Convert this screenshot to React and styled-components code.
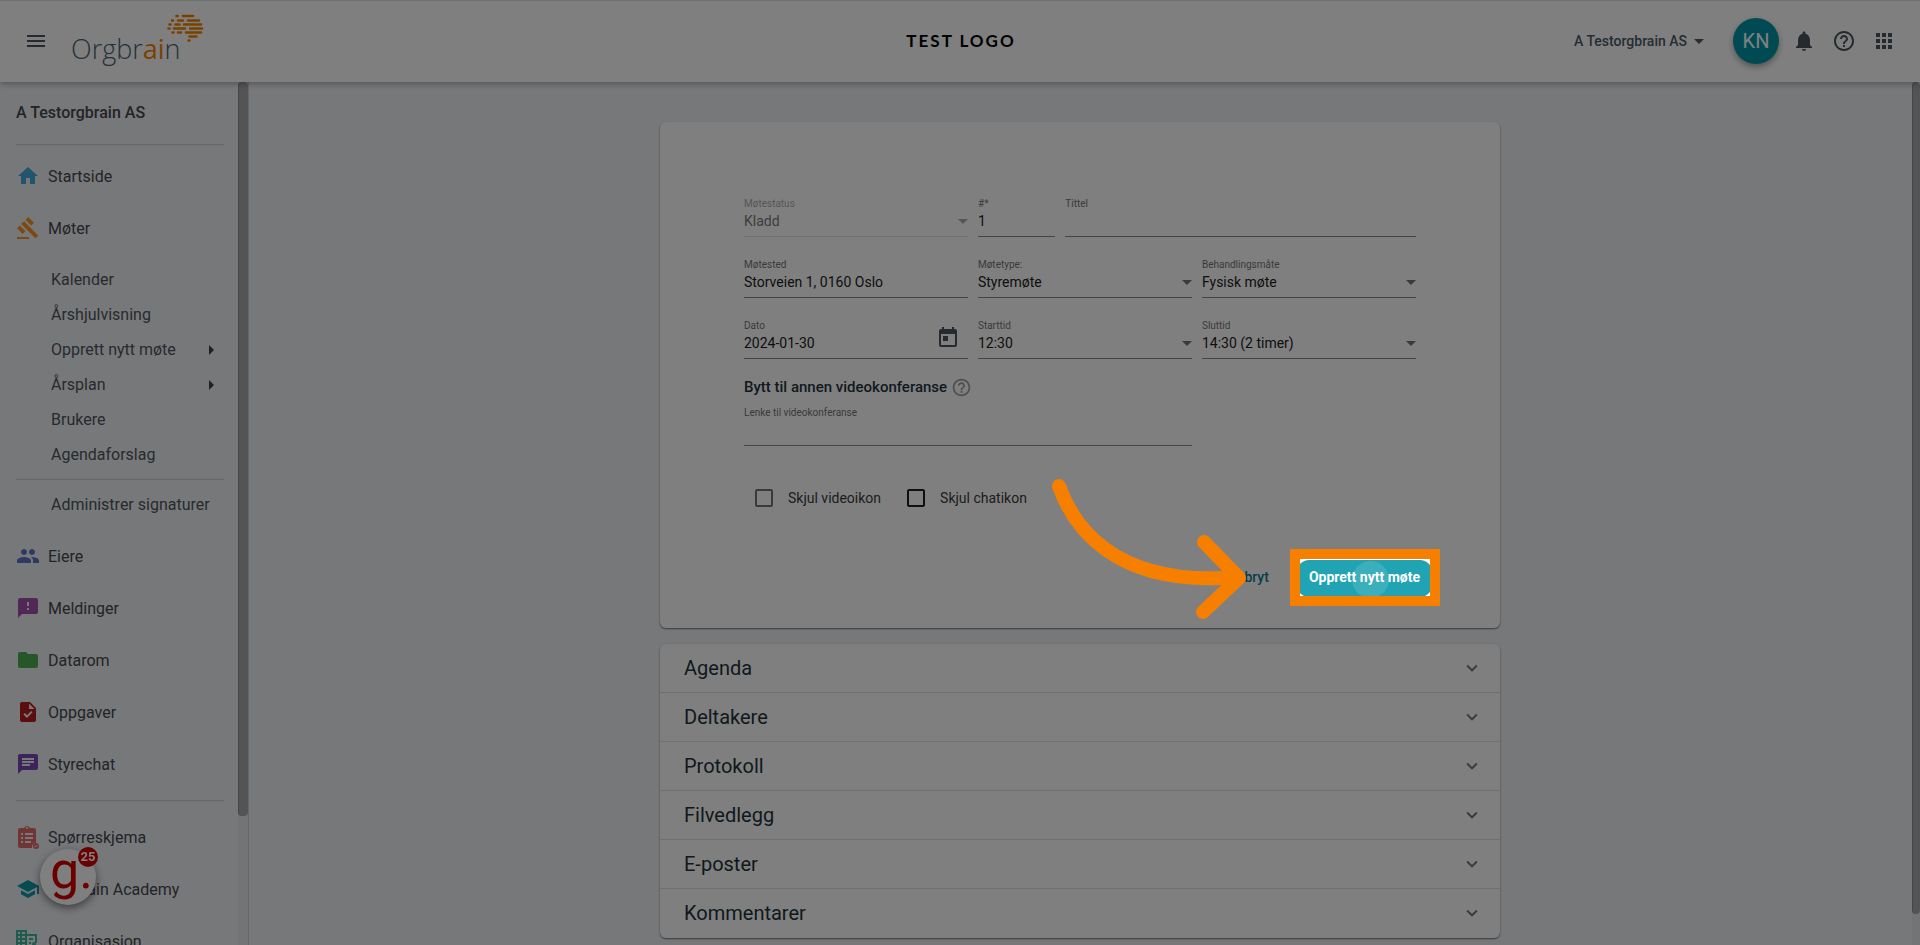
import React from 'react';

import styled, { createGlobalStyle } from 'styled-components';
import {
	MdApps,
	MdArrowDropDown,
	MdArrowRight,
	MdChat,
	MdExpandMore,
	MdFeedback,
	MdFolder,
	MdGavel,
	MdHelpOutline,
	MdHome,
	MdMenu,
	MdNotifications,
	MdPeople,
	MdSchool,
	MdTask,
	MdToday,
} from 'react-icons/md';

const GlobalStyle = createGlobalStyle`
	* {
		box-sizing: border-box;
	}

	body {
		margin: 0;
		font-family: Roboto, 'Liberation Sans', sans-serif;
		font-size: 14px;
		color: #212121;
	}

	button, input, select {
		margin: 0;
		font: inherit;
		color: inherit;
	}

	a {
		color: inherit;
		text-decoration: none;
	}
`;

const Shell = styled.div`
	display: flex;
	flex-direction: column;
	height: 100vh;
	overflow: hidden;
	background: #eff1f4;
`;

/* ---------- header ---------- */

const Header = styled.header`
	position: relative;
	z-index: 2;
	flex: none;
	display: grid;
	grid-template-columns: 1fr auto 1fr;
	align-items: center;
	height: 82px;
	padding: 0 24px;
	background: white;
	box-shadow: inset 0 1px #e4e4e4, 0 2px 6px rgba(0, 0, 0, 0.3);
`;

const HeaderSide = styled.div`
	display: flex;
	align-items: center;
	justify-content: ${(props) => (props.$end ? 'flex-end' : 'flex-start')};
	gap: ${(props) => (props.$end ? '16px' : '23px')};
`;

const IconButton = styled.button`
	display: flex;
	padding: 0;
	border: none;
	background: none;
	color: ${(props) => props.$color || '#4a545c'};
	font-size: ${(props) => props.$size || 24}px;
	cursor: pointer;
`;

const BrandLink = styled.a`
	position: relative;
	display: block;
	padding-top: 16px;
	color: #4a6572;
	font-family: 'Open Sans', sans-serif;
	font-size: 27px;
	font-weight: 300;
	line-height: 36px;

	em {
		font-style: normal;
		font-weight: 400;
		color: #f08200;
	}

	svg {
		position: absolute;
		left: 95px;
		top: -2px;
	}
`;

const CompanyLogo = styled.div`
	padding: 0 0 2px 2px;
	font-family: Lato, sans-serif;
	font-size: 17px;
	font-weight: 700;
	letter-spacing: 2px;
	color: black;
`;

const OrgSwitch = styled.button`
	display: flex;
	align-items: center;
	margin-right: 6px;
	padding: 0;
	border: none;
	background: none;
	color: #4a5a66;
	font-weight: 500;
	cursor: pointer;

	svg {
		font-size: 24px;
	}
`;

const Avatar = styled.button`
	width: 46px;
	height: 46px;
	margin-right: -3px;
	padding: 0;
	border: none;
	border-radius: 50%;
	background: #0097a7;
	color: white;
	font-size: 20px;
	box-shadow: 0 3px 6px rgba(0, 0, 0, 0.35);
	cursor: pointer;
`;

/* ---------- sidebar ---------- */

const Body = styled.div`
	flex: 1;
	display: flex;
	min-height: 0;
`;

const Sidebar = styled.aside`
	flex: none;
	display: flex;
	width: 248px;
	box-shadow: 1px 0 #cdd0d3;
`;

const Nav = styled.nav`
	flex: 1;
	overflow: hidden;
	padding: 19px 14px 0 16px;
	color: #46484c;
	font-size: 16px;
`;

const NavTitle = styled.h2`
	margin: 0;
	padding-bottom: 19px;
	font-size: 16px;
	font-weight: 500;
	line-height: 24px;
`;

const NavRule = styled.hr`
	height: 1px;
	margin: ${(props) => props.$margin};
	border: none;
	background: #ccced1;
`;

const NavItem = styled.a`
	display: flex;
	align-items: center;
	gap: 8px;
	height: 52px;

	svg {
		flex: none;
		width: 24px;
		height: 24px;
		color: ${(props) => props.$color};
	}
`;

const SubNav = styled.div`
	padding: 8px 0;
`;

const SubItem = styled.a`
	display: flex;
	align-items: center;
	justify-content: space-between;
	height: 35px;
	padding: 0 1px 0 35px;
	color: #50555b;

	svg {
		font-size: 24px;
		color: #3c444c;
	}
`;

const Scrollbar = styled.div`
	flex: none;
	width: ${(props) => props.$width}px;
	background: #e6e8ea;
`;

const Thumb = styled.div`
	height: ${(props) => props.$share}%;
	border-left: 1px solid #7f919c;
	border-radius: 4px;
	background: #a8a8a8;
`;

/* ---------- meeting form ---------- */

const Main = styled.main`
	flex: 1;
	display: flex;
	flex-direction: column;
	align-items: center;
	gap: 16px;
	padding: 40px 24px 8px;
`;

const Card = styled.section`
	width: 100%;
	max-width: 840px;
	border-radius: 6px;
	background: white;
	box-shadow: 0 1px 2px rgba(0, 0, 0, 0.55);
`;

const Form = styled.form`
	padding: 74px 68px 31px;
`;

const Fields = styled.div`
	padding: 0 16px;
`;

const Row = styled.div`
	display: flex;
	margin-bottom: 20px;
`;

const FieldBox = styled.div`
	flex: 0 0 ${(props) => props.$basis};
	min-width: 0;
	padding-left: ${(props) => (props.$first ? 0 : 10)}px;
	opacity: ${(props) => (props.$disabled ? 0.6 : 1)};
`;

const Label = styled.label`
	display: block;
	font-size: 10px;
	line-height: 16px;
	color: #757575;
`;

const ControlArea = styled.div`
	display: grid;
	align-items: center;
	border-bottom: 1px solid ${(props) => (props.$disabled ? '#d0d0d0' : '#8a8a8a')};

	> * {
		grid-area: 1 / 1;
	}

	> button {
		align-self: start;
		align-items: center;
		justify-self: end;
		height: 8px;
		margin-right: 8px;
	}
`;

const Control = styled.input`
	width: 100%;
	height: 24px;
	padding: 0 0 6px;
	border: none;
	outline: none;
	background: none;
	appearance: none;
	line-height: 18px;
	opacity: 1;
`;

const Triangle = styled.span`
	justify-self: end;
	margin-bottom: 5px;
	border: 5px solid transparent;
	border-top-color: #757575;
	border-bottom: none;
	pointer-events: none;
`;

const VideoHeading = styled.h3`
	display: flex;
	align-items: center;
	gap: 4px;
	margin: -4px 0 6px;
	font-size: 15px;
	font-weight: 500;
	line-height: 24px;
	color: #1f3540;
`;

const CheckRow = styled.div`
	display: flex;
	gap: 26px;
	margin-top: 40px;
	padding-left: 11px;
`;

const CheckLabel = styled.label`
	display: flex;
	align-items: center;
	gap: 15px;
	height: 24px;
	color: #3a3a3a;
`;

const CheckBox = styled.input`
	appearance: none;
	width: 18px;
	height: 18px;
	border: 2px solid ${(props) => props.$color};
	border-radius: 2px;
`;

const Actions = styled.div`
	display: flex;
	justify-content: flex-end;
	gap: 16px;
	margin-top: 50px;
`;

const ActionButton = styled.button`
	position: relative;
	overflow: hidden;
	height: 37px;
	padding: 0 12px 4px;
	border: none;
	border-radius: 12px;
	background: ${(props) => (props.$primary ? '#20a4b3' : 'transparent')};
	color: ${(props) => (props.$primary ? 'white' : '#0f7f8c')};
	font-weight: ${(props) => (props.$primary ? 700 : 500)};
	cursor: pointer;
`;

const Ripple = styled.span`
	position: absolute;
	left: 55px;
	top: 1px;
	width: 37px;
	height: 37px;
	border-radius: 50%;
	background: rgba(255, 255, 255, 0.12);
`;

/* ---------- guide overlay ---------- */

const GuideAnchor = styled.div`
	position: relative;
`;

// The shadow spread darkens everything outside the frame
const Spotlight = styled.div`
	position: absolute;
	z-index: 10;
	inset: -11px -8px -9px -7px;
	border: 10px solid #f77f00;
	box-shadow: 0 0 0 9999px rgba(0, 0, 0, 0.5);
	pointer-events: none;
`;

const GuideArrow = styled.svg`
	position: absolute;
	z-index: 11;
	right: calc(100% + 40px);
	top: -86px;
	fill: none;
	stroke: #f77f00;
	stroke-width: 14;
	stroke-linecap: round;
	stroke-linejoin: round;
	pointer-events: none;
`;

/* ---------- sections ---------- */

const SectionButton = styled.button`
	display: flex;
	align-items: center;
	justify-content: space-between;
	width: 100%;
	height: 49px;
	padding: 0 17px 0 24px;
	border: none;
	border-bottom: 1px solid #e0e0e0;
	background: none;
	color: #22333b;
	font-size: 20px;
	text-align: left;
	cursor: pointer;

	&:last-child {
		border-bottom-color: transparent;
	}

	svg {
		font-size: 22px;
		color: #757575;
	}
`;

/* ---------- help widget ---------- */

const Widget = styled.button`
	position: fixed;
	z-index: 3;
	left: 40px;
	bottom: 40px;
	width: 56px;
	height: 56px;
	padding: 0 0 12px 7px;
	border: none;
	border-radius: 50%;
	background: white;
	color: #d40000;
	font-size: 52px;
	font-weight: 400;
	line-height: 40px;
	box-shadow: 0 3px 8px rgba(0, 0, 0, 0.5);
`;

const WidgetBadge = styled.span`
	position: absolute;
	right: -2px;
	top: -2px;
	width: 20px;
	height: 20px;
	border-radius: 50%;
	background: #d40000;
	color: white;
	font-size: 13px;
	font-weight: 700;
	line-height: 20px;
	text-align: center;
`;

/* ---------- drawings ---------- */

const BrainMark = () => (
	<svg width='40' height='30' viewBox='166 13 40 30' fill='none' stroke='#f08200' strokeWidth='2.6' strokeLinecap='round'>
		<path d='M176.5 16h1.2M183 16h10M172 20.5h1M178 20.5h5M188 20.5h11M169.500 24.500h1M175.500 24.500h4M184 24.500h17M168.500 28.500h1M174 28.500h11M190 28.500h12M172.500 32.500h1M178 32.500h3M186 32.500h15M189.500 36.500h7M188.500 40.500h1' />
	</svg>
);

const SurveyIcon = () => (
	<svg viewBox='0 0 24 24' fill='currentColor'>
		<path
			fillRule='evenodd'
			d='M4 3h4.200a3 3 0 0 1 5.600 0H18a2 2 0 0 1 2 2v13a4 4 0 0 0-4 5H4a2 2 0 0 1-2-2V5a2 2 0 0 1 2-2zm7-1a1 1 0 1 0 0 2 1 1 0 0 0 0-2zM5 8h2v2H5zm4 0h8v2H9zm-4 4h2v2H5zm4 0h8v2H9zm-4 4h2v2H5zm4 0h6v2H9z'
		/>
		<circle cx='20' cy='21' r='3' />
		<path d='M18.500 21l1 1 2-2' fill='none' stroke='#eff1f4' />
	</svg>
);

const BuildingIcon = () => (
	<svg viewBox='0 0 24 24' fill='currentColor'>
		<path
			fillRule='evenodd'
			d='M0 1h11v4h10v9h-2V7h-8v14H0zm2 2v2h2V3zm4 0v2h3V3zM2 7v2h2V7zm4 0v2h3V7zm-4 4v2h2v-2zm4 0v2h3v-2zm-4 4v2h2v-2zm4 0v2h3v-2z'
		/>
		<path d='M13 9h4v2h-4zM13 13h2v2h-2z' />
		<circle cx='18' cy='15' r='2' />
		<path d='M13 21c0-5 10-5 10 0z' />
	</svg>
);

/* ---------- parts ---------- */

const Field = ({ id, label, value = '', basis, first, disabled, options, icon }) => (
	<FieldBox $basis={basis} $first={first} $disabled={disabled}>
		<Label htmlFor={id}>{label}</Label>
		<ControlArea $disabled={disabled}>
			{options ? (
				<>
					<Control as='select' id={id} disabled={disabled}>
						{options.map((option) => (
							<option key={option}>{option}</option>
						))}
					</Control>
					<Triangle />
				</>
			) : (
				<Control id={id} type='text' defaultValue={value} />
			)}
			{icon}
		</ControlArea>
	</FieldBox>
);

const SECTIONS = ['Agenda', 'Deltakere', 'Protokoll', 'Filvedlegg', 'E-poster', 'Kommentarer'];

const SUB_ITEMS = [
	{ name: 'Kalender' },
	{ name: 'Årshjulvisning' },
	{ name: 'Opprett nytt møte', more: true },
	{ name: 'Årsplan', more: true },
	{ name: 'Brukere' },
	{ name: 'Agendaforslag' },
];

const MIDDLE_ITEMS = [
	{ name: 'Eiere', Icon: MdPeople, color: '#5c75c4' },
	{ name: 'Meldinger', Icon: MdFeedback, color: '#a34fad' },
	{ name: 'Datarom', Icon: MdFolder, color: '#4caf50' },
	{ name: 'Oppgaver', Icon: MdTask, color: '#b71c1c' },
	{ name: 'Styrechat', Icon: MdChat, color: '#7647b8' },
];

const LAST_ITEMS = [
	{ name: 'Spørreskjema', Icon: SurveyIcon, color: '#e56b6b' },
	{ name: 'Orgbrain Academy', Icon: MdSchool, color: '#0f97a7' },
	{ name: 'Organisasjon', Icon: BuildingIcon, color: '#3fb8a0' },
];

const NavLinks = ({ items }) =>
	items.map(({ name, Icon, color }) => (
		<NavItem key={name} href='#' $color={color}>
			<Icon />
			{name}
		</NavItem>
	));

const App = () => {
	return (
		<Shell>
			<GlobalStyle />
			<Header>
				<HeaderSide>
					<IconButton aria-label='Meny'>
						<MdMenu />
					</IconButton>
					<BrandLink href='#'>
						Orgbr<em>ai</em>n
						<BrainMark />
					</BrandLink>
				</HeaderSide>
				<CompanyLogo>TEST LOGO</CompanyLogo>
				<HeaderSide $end>
					<OrgSwitch>
						A Testorgbrain AS
						<MdArrowDropDown />
					</OrgSwitch>
					<Avatar>KN</Avatar>
					<IconButton aria-label='Varsler'>
						<MdNotifications />
					</IconButton>
					<IconButton aria-label='Hjelp'>
						<MdHelpOutline />
					</IconButton>
					<IconButton aria-label='Apper'>
						<MdApps />
					</IconButton>
				</HeaderSide>
			</Header>
			<Body>
				<Sidebar>
					<Nav>
						<NavTitle>A Testorgbrain AS</NavTitle>
						<NavRule $margin='0 0 5px' />
						<NavLinks
							items={[
								{ name: 'Startside', Icon: MdHome, color: '#43a9dc' },
								{ name: 'Møter', Icon: MdGavel, color: '#f79420' },
							]}
						/>
						<SubNav>
							{SUB_ITEMS.map(({ name, more }) => (
								<SubItem key={name} href='#'>
									{name}
									{more && <MdArrowRight />}
								</SubItem>
							))}
							<NavRule $margin='7px 0' />
							<SubItem href='#'>Administrer signaturer</SubItem>
						</SubNav>
						<NavLinks items={MIDDLE_ITEMS} />
						<NavRule $margin='10px 0' />
						<NavLinks items={LAST_ITEMS} />
					</Nav>
					<Scrollbar $width={10}>
						<Thumb $share={85} />
					</Scrollbar>
				</Sidebar>
				<Main>
					<Card>
						<Form onSubmit={(e) => e.preventDefault()}>
							<Fields>
								<Row>
									<Field id='status' label='Møtestatus' basis='33.33%' first disabled options={['Kladd']} />
									<Field id='number' label='#*' value='1' basis='13%' />
									<Field id='title' label='Tittel' basis='53.67%' />
								</Row>
								<Row>
									<Field id='place' label='Møtested' value='Storveien 1, 0160 Oslo' basis='33.33%' first />
									<Field id='type' label='Møtetype:' basis='33.33%' options={['Styremøte']} />
									<Field id='mode' label='Behandlingsmåte' basis='33.33%' options={['Fysisk møte']} />
								</Row>
								<Row>
									<Field
										id='date'
										label='Dato'
										value='2024-01-30'
										basis='33.33%'
										first
										icon={
											<IconButton type='button' aria-label='Velg dato'>
												<MdToday />
											</IconButton>
										}
									/>
									<Field id='start' label='Starttid' basis='33.33%' options={['12:30']} />
									<Field id='end' label='Sluttid' basis='33.33%' options={['14:30 (2 timer)']} />
								</Row>
								<VideoHeading>
									Bytt til annen videokonferanse
									<IconButton type='button' aria-label='Om videokonferanse' $color='#9a9fa2' $size={21}>
										<MdHelpOutline />
									</IconButton>
								</VideoHeading>
								<Row>
									<Field id='link' label='Lenke til videokonferanse' basis='66.67%' first />
								</Row>
								<CheckRow>
									<CheckLabel>
										<CheckBox type='checkbox' $color='#757575' />
										Skjul videoikon
									</CheckLabel>
									<CheckLabel>
										<CheckBox type='checkbox' $color='#212121' />
										Skjul chatikon
									</CheckLabel>
								</CheckRow>
							</Fields>
							<Actions>
								<ActionButton type='button'>Avbryt</ActionButton>
								<GuideAnchor>
									<ActionButton $primary>
										Opprett nytt møte
										<Ripple />
									</ActionButton>
									<Spotlight />
									<GuideArrow width='216' height='152' viewBox='1040 474 216 152'>
										<path d='M1058 486C1072 526 1112 583 1222 578' />
										<path d='M1203 542l35 36-36 34' />
										<path d='M1220 578h16' />
									</GuideArrow>
								</GuideAnchor>
							</Actions>
						</Form>
					</Card>
					<Card>
						{SECTIONS.map((section) => (
							<SectionButton key={section}>
								{section}
								<MdExpandMore />
							</SectionButton>
						))}
					</Card>
				</Main>
				<Scrollbar $width={8}>
					<Thumb $share={96.4} />
				</Scrollbar>
			</Body>
			<Widget aria-label='Hjelpeguider'>
				g.
				<WidgetBadge>25</WidgetBadge>
			</Widget>
		</Shell>
	);
};

export default App;
